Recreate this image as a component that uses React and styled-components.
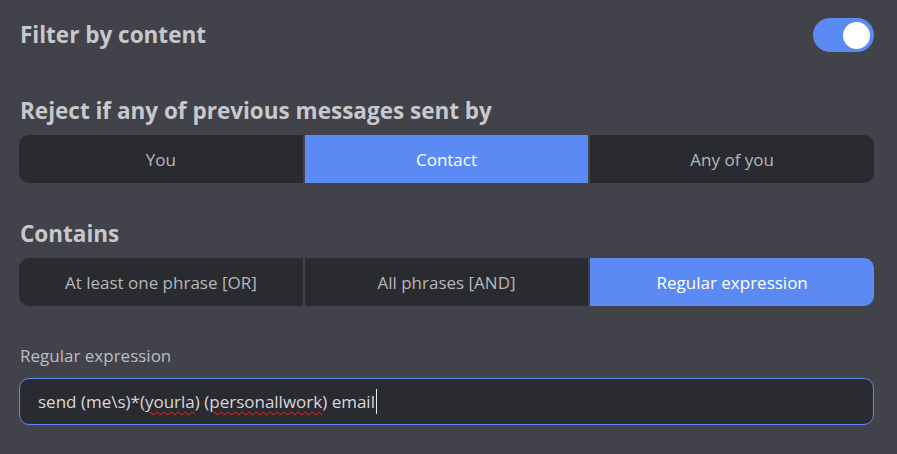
import React from "react";
import styled, { createGlobalStyle } from "styled-components";

const Global = createGlobalStyle`
  html, body { margin: 0; padding: 0; background: #41424a; }
  body { font-family: "Open Sans", "Noto Sans", sans-serif; }
`;

const Page = styled.div`
  width: 897px;
  height: 454px;
  box-sizing: border-box;
  padding: 18px 23px 0 19px;
  background: #41424a;
  display: flex;
  flex-direction: column;
`;

const TopRow = styled.div`
  display: flex;
  align-items: center;
  justify-content: space-between;
  height: 34px;
`;

const Heading = styled.h2`
  margin: ${(p) => p.$top || 0}px 0 0 1px;
  font-family: "Open Sans", sans-serif;
  font-size: 22.5px;
  line-height: 24px;
  font-weight: 700;
  color: #c8c8cc;
`;

const Toggle = styled.div`
  width: 61px;
  height: 34px;
  border-radius: 17px;
  background: #5b8af5;
  display: flex;
  align-items: center;
  justify-content: flex-end;
  padding-right: 4px;
  box-sizing: border-box;
`;

const Knob = styled.div`
  width: 27px;
  height: 27px;
  border-radius: 50%;
  background: #ffffff;
`;

const Segmented = styled.div`
  margin-top: 12px;
  display: grid;
  grid-template-columns: 1fr 1fr 1fr;
  column-gap: 2px;
  height: 48px;
  border-radius: 10px;
  overflow: hidden;
  background: #41424a;
`;

const Segment = styled.div`
  display: flex;
  align-items: center;
  justify-content: center;
  background: ${(p) => (p.$active ? "#5b8af5" : "#2a2b30")};
  color: ${(p) => (p.$active ? "#ffffff" : "#b7b7bb")};
  font-size: 17px;
`;

const Label = styled.div`
  margin-top: 40px;
  margin-left: 1px;
  font-size: 17px;
  line-height: 20px;
  color: #bdbdc1;
`;

const Field = styled.div`
  margin-top: 12px;
  height: 47px;
  box-sizing: border-box;
  border: 1.5px solid #5b8af5;
  border-radius: 10px;
  background: #2a2b30;
  display: flex;
  align-items: center;
  padding-left: 18px;
  font-size: 17px;
  color: #d8d8dc;
  white-space: pre;
`;

const Misspelled = styled.span`
  text-decoration: underline wavy #e0262a;
  text-decoration-thickness: 1px;
  text-underline-offset: 3px;
`;

const Caret = styled.span`
  display: inline-block;
  width: 1px;
  height: 25px;
  background: #e8e8ea;
  margin-left: 1px;
`;

function SegmentGroup({ options, active }) {
  return (
    <Segmented>
      {options.map((o, i) => (
        <Segment key={o} $active={i === active}>
          {o}
        </Segment>
      ))}
    </Segmented>
  );
}

export default function App() {
  return (
    <>
      <Global />
      <Page>
        <TopRow>
          <Heading>Filter by content</Heading>
          <Toggle>
            <Knob />
          </Toggle>
        </TopRow>
        <Heading $top={47}>Reject if any of previous messages sent by</Heading>
        <SegmentGroup options={["You", "Contact", "Any of you"]} active={1} />
        <Heading $top={39}>Contains</Heading>
        <SegmentGroup
          options={["At least one phrase [OR]", "All phrases [AND]", "Regular expression"]}
          active={2}
        />
        <Label>Regular expression</Label>
        <Field>
          send (me\s)*(<Misspelled>yourla</Misspelled>) (<Misspelled>personallwork</Misspelled>) email
          <Caret />
        </Field>
      </Page>
    </>
  );
}
